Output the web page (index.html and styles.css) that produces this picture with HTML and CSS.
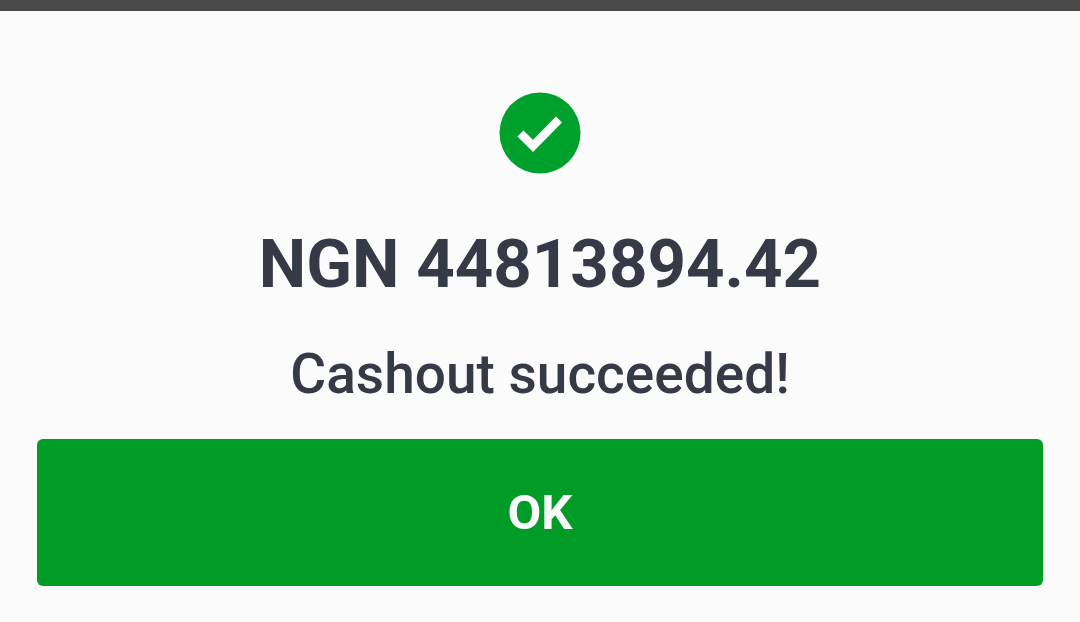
FILE: index.html
```html
<!DOCTYPE html>
<html lang="en">
<head>
<meta charset="utf-8">
<title>Cashout succeeded</title>
<link rel="stylesheet" href="styles.css">
</head>
<body>
<div class="topbar"></div>
<main class="dialog">
  <svg class="status-icon" width="82" height="82" viewBox="0 0 82 82" aria-hidden="true">
    <circle cx="41" cy="41" r="40.5" fill="#00a02d"/>
    <path d="M21.5 41.5 L34 54 L60 27.5" fill="none" stroke="#fff" stroke-width="8.5"/>
  </svg>
  <h1 class="amount">NGN 44813894.42</h1>
  <p class="message">Cashout succeeded!</p>
  <button class="ok" type="button">OK</button>
</main>
</body>
</html>
```
FILE: styles.css
```css
* { box-sizing: border-box; }
html, body { margin: 0; height: 100%; }
body {
  width: 1080px;
  height: 622px;
  overflow: hidden;
  background: #fbfbfc;
  font-family: Roboto, "Liberation Sans", sans-serif;
  display: flex;
  flex-direction: column;
}
.topbar { height: 11px; background: #4a4a4a; flex: none; }
.dialog {
  flex: 1;
  display: flex;
  flex-direction: column;
  align-items: center;
  padding: 81px 37px 0;
}
.status-icon { display: block; flex: none; }
.amount {
  margin: 52px 0 0;
  font-size: 67.2px;
  line-height: 76px;
  font-weight: 700;
  color: #353a46;
  white-space: nowrap;
}
.message {
  margin: 42px 0 0;
  font-size: 55px;
  line-height: 60px;
  font-weight: 500;
  color: #353a46;
  white-space: nowrap;
}
.ok {
  margin-top: 35px;
  width: 100%;
  height: 147px;
  border: 0;
  border-radius: 6px;
  background: #009c27;
  color: #fbfbfb;
  font: 700 49px/1 Roboto, "Liberation Sans", sans-serif;
  padding: 0;
}
```
